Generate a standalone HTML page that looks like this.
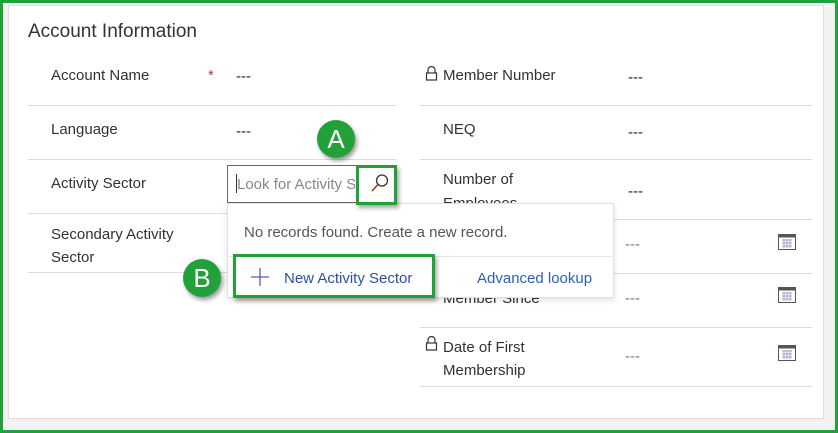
<!DOCTYPE html>
<html><head><style>
body{margin:0;width:838px;height:433px;overflow:hidden;font-family:"Liberation Sans",sans-serif;color:#323130;}
.outer{position:absolute;left:0;top:0;width:832px;height:427px;border:3px solid #22a03a;background:#f3f2f1;}
.card{position:absolute;left:8px;top:5px;width:814px;height:412px;background:#fff;border:1px solid #dedede;}
.a{position:absolute;white-space:nowrap;font-size:15px;}
.ln{position:absolute;height:1px;background:#dcdcdc;}
.d{position:absolute;font-size:15px;color:#222;}
.dg{position:absolute;font-size:15px;color:#777;}
.gb{position:absolute;border:3px solid #22a03a;box-shadow:2px 3px 4px rgba(0,0,0,.35);}
.badge{position:absolute;width:38px;height:38px;border-radius:50%;background:#22a03a;color:#fff;font-size:26px;text-align:center;line-height:38px;box-shadow:2px 3px 4px rgba(0,0,0,.4);}
</style></head><body>
<div class="outer"></div>
<div class="card"></div>
<div class="a" style="left:28px;top:21px;font-size:19px;color:#333">Account Information</div>

<div class="a" style="left:51px;top:67px">Account Name</div>
<div class="a" style="left:208px;top:67px;color:#c4314b">*</div>
<div class="d" style="left:236px;top:68px">---</div>
<div class="ln" style="left:28px;top:105px;width:369px"></div>
<div class="a" style="left:51px;top:121px">Language</div>
<div class="d" style="left:236px;top:123px">---</div>
<div class="ln" style="left:28px;top:159px;width:369px"></div>
<div class="a" style="left:51px;top:175px">Activity Sector</div>
<div class="ln" style="left:28px;top:213px;width:200px"></div>
<div class="a" style="left:51px;top:223px;line-height:23px">Secondary Activity<br>Sector</div>
<div class="ln" style="left:28px;top:272px;width:200px"></div>

<svg style="position:absolute;left:425px;top:66px" width="13" height="15" viewBox="0 0 13 15"><path d="M3 7V4a3.5 3.5 0 0 1 7 0v3" fill="none" stroke="#333" stroke-width="1.2"/><rect x="1.5" y="7" width="10" height="7" fill="none" stroke="#333" stroke-width="1.2"/></svg>
<div class="a" style="left:443px;top:67px">Member Number</div>
<div class="d" style="left:628px;top:69px">---</div>
<div class="ln" style="left:420px;top:105px;width:392px"></div>
<div class="a" style="left:443px;top:121px">NEQ</div>
<div class="d" style="left:628px;top:124px">---</div>
<div class="ln" style="left:420px;top:159px;width:392px"></div>
<div class="a" style="left:443px;top:168px;line-height:24px;height:41px;overflow:hidden">Number of<br>Employees</div>
<div class="d" style="left:628px;top:183px">---</div>
<div class="ln" style="left:420px;top:219px;width:392px"></div>
<div class="dg" style="left:625px;top:236px">---</div>
<div class="ln" style="left:420px;top:273px;width:392px"></div>
<div class="a" style="left:443px;top:290px">Member Since</div>
<div class="dg" style="left:625px;top:290px">---</div>
<div class="ln" style="left:420px;top:327px;width:392px"></div>
<svg style="position:absolute;left:425px;top:336px" width="13" height="15" viewBox="0 0 13 15"><path d="M3 7V4a3.5 3.5 0 0 1 7 0v3" fill="none" stroke="#333" stroke-width="1.2"/><rect x="1.5" y="7" width="10" height="7" fill="none" stroke="#333" stroke-width="1.2"/></svg>
<div class="a" style="left:443px;top:336px;line-height:23px">Date of First<br>Membership</div>
<div class="dg" style="left:625px;top:348px">---</div>
<div class="ln" style="left:420px;top:386px;width:392px"></div>

<svg style="position:absolute;left:778px;top:233px" width="18" height="17" viewBox="0 0 18 17"><rect x="0.5" y="1.5" width="17" height="15" fill="none" stroke="#555"/><rect x="0.5" y="1.5" width="17" height="3" fill="#555"/><path d="M4 7h10M4 10h10M4 13h10M6 6v9M9 6v9M12 6v9" stroke="#a6a0c8" stroke-width="1"/></svg>
<svg style="position:absolute;left:778px;top:286px" width="18" height="17" viewBox="0 0 18 17"><rect x="0.5" y="1.5" width="17" height="15" fill="none" stroke="#555"/><rect x="0.5" y="1.5" width="17" height="3" fill="#555"/><path d="M4 7h10M4 10h10M4 13h10M6 6v9M9 6v9M12 6v9" stroke="#a6a0c8" stroke-width="1"/></svg>
<svg style="position:absolute;left:778px;top:344px" width="18" height="17" viewBox="0 0 18 17"><rect x="0.5" y="1.5" width="17" height="15" fill="none" stroke="#555"/><rect x="0.5" y="1.5" width="17" height="3" fill="#555"/><path d="M4 7h10M4 10h10M4 13h10M6 6v9M9 6v9M12 6v9" stroke="#a6a0c8" stroke-width="1"/></svg>

<div style="position:absolute;left:227px;top:203px;width:385px;height:93px;background:#fff;border:1px solid #e1e1e1;box-shadow:0 2px 6px rgba(0,0,0,.12)"></div>
<div class="a" style="left:244px;top:224px;color:#555">No records found. Create a new record.</div>
<div class="ln" style="left:228px;top:256px;width:384px;background:#e6e6e6"></div>
<svg style="position:absolute;left:250px;top:267px" width="20" height="20"><path d="M10 1v18M1 10h18" stroke="#5a5fa8" stroke-width="1.3"/></svg>
<div class="a" style="left:284px;top:270px;color:#2b4fa8">New Activity Sector</div>
<div class="a" style="left:477px;top:270px;color:#2b5fb8">Advanced lookup</div>
<div class="gb" style="left:233px;top:254px;width:196px;height:38px"></div>

<div style="position:absolute;left:227px;top:165px;width:168px;height:36px;border:1px solid #666;background:#fff"></div>
<div style="position:absolute;left:236px;top:174px;width:1px;height:19px;background:#333"></div>
<div class="a" style="left:237px;top:176px;color:#888;width:118px;overflow:hidden">Look for Activity Sector</div>
<svg style="position:absolute;left:369px;top:172px" width="22" height="22" viewBox="0 0 22 22"><circle cx="13" cy="8.5" r="5.5" fill="none" stroke="#333" stroke-width="1.3"/><path d="M9 12.5L3 19" stroke="#8a3a1a" stroke-width="1.5"/></svg>
<div class="gb" style="left:356px;top:165px;width:35px;height:34px"></div>

<div class="badge" style="left:317px;top:120px">A</div>
<div class="badge" style="left:183px;top:259px">B</div>
</body></html>
